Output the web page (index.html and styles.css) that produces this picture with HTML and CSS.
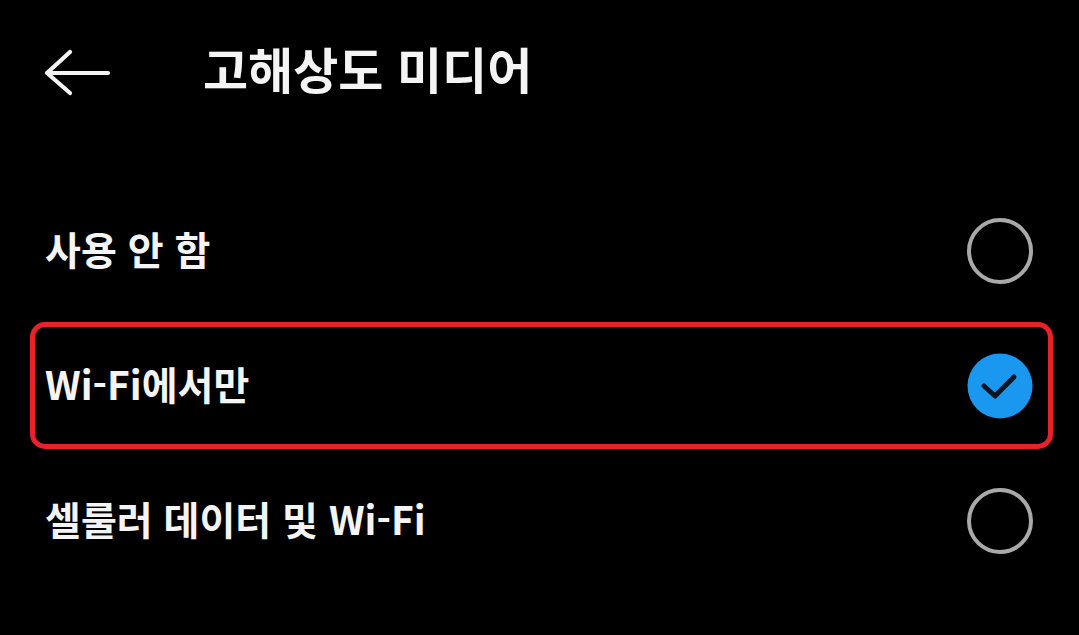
FILE: index.html
```html
<!DOCTYPE html>
<html lang="ko">
<head>
<meta charset="utf-8">
<title>고해상도 미디어</title>
<link rel="stylesheet" href="styles.css">
</head>
<body>
<header class="topbar">
  <svg class="back" width="72" height="50" viewBox="0 0 72 50" aria-hidden="true">
    <path d="M7 25 H68 M7 25 L30 4 M7 25 L30 45" fill="none" stroke="#f4f4f4" stroke-width="4.2" stroke-linecap="round" stroke-linejoin="round"/>
  </svg>
  <h1 class="title">고해상도 미디어</h1>
</header>
<ul class="options">
  <li class="option">
    <span class="label">사용 안 함</span>
    <span class="radio"></span>
  </li>
  <li class="option option-selected">
    <span class="label">Wi-Fi에서만</span>
    <svg class="radio-checked" width="66" height="66" viewBox="0 0 66 66" aria-hidden="true">
      <circle cx="33" cy="33" r="32.5" fill="#1a98ef"/>
      <path d="M17 33 L28 43 L47 24" fill="none" stroke="#0b1422" stroke-width="5" stroke-linecap="round" stroke-linejoin="round"/>
    </svg>
  </li>
  <li class="option">
    <span class="label">셀룰러 데이터 및 Wi-Fi</span>
    <span class="radio"></span>
  </li>
</ul>
</body>
</html>
```
FILE: styles.css
```css
html, body {
  margin: 0;
  padding: 0;
  background: #000;
}
body {
  width: 1079px;
  height: 635px;
  overflow: hidden;
  font-family: "Noto Sans CJK KR", "Noto Sans", sans-serif;
  color: #f4f4f4;
}
.topbar {
  height: 146px;
  display: flex;
  align-items: center;
  padding-left: 40px;
}
.back {
  display: block;
}
.title {
  margin: 0 0 12px 91px;
  font-size: 49px;
  font-weight: 700;
  line-height: 1;
  letter-spacing: 0;
}
.options {
  list-style: none;
  margin: 0;
  padding: 41px 26px 0 30px;
  display: flex;
  flex-direction: column;
  gap: 8px;
}
.option {
  height: 127px;
  box-sizing: border-box;
  border: 5px solid transparent;
  border-radius: 15px;
  display: flex;
  align-items: center;
  justify-content: space-between;
  padding: 0 15px 0 10px;
}
.option-selected {
  border-color: #e8212b;
}
.label {
  font-size: 39px;
  font-weight: 700;
  line-height: 1;
  margin-bottom: 4px;
}
.radio {
  width: 66px;
  height: 66px;
  box-sizing: border-box;
  border: 4.5px solid #a9a9a9;
  border-radius: 50%;
}
.radio-checked {
  display: block;
}
```
